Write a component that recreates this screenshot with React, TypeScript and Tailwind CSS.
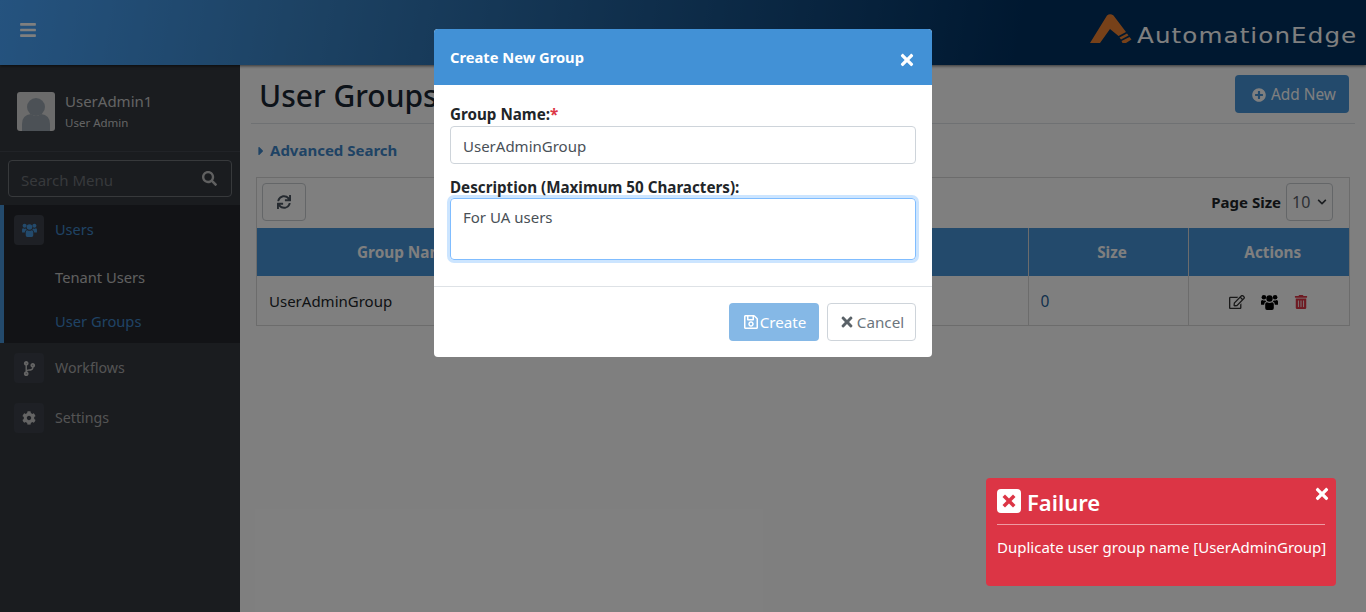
import React from "react";
import {
  FaBars, FaSearch, FaSync, FaCodeBranch, FaCog, FaPlusCircle, FaRegEdit, FaTrashAlt,
  FaRegSave, FaTimes, FaCaretRight, FaChevronDown,
} from "react-icons/fa";

function UsersIcon({ w, h, className }: { w: number; h: number; className?: string }) {
  return (
    <svg width={w} height={h} viewBox="0 0 17 16" className={className} fill="currentColor">
      <circle cx="8.5" cy="4.5" r="3.2" />
      <circle cx="2.9" cy="3.2" r="2.3" />
      <circle cx="14.1" cy="3.2" r="2.3" />
      <path d="M4.2 10.2 Q4.2 8.2 6 8.2 Q8.5 9.6 11 8.2 Q12.8 8.2 12.8 10.2 V14 Q12.8 16 11 16 H6 Q4.2 16 4.2 14 Z" />
      <path d="M0 10.5 V7.6 Q0 6 1.4 6 Q2.8 6.9 4.4 6.4 Q4.8 7.3 5.4 7.6 Q3.2 8 3.1 10.8 H1 Q0 10.8 0 10.5 Z" />
      <path d="M17 10.5 V7.6 Q17 6 15.6 6 Q14.2 6.9 12.6 6.4 Q12.2 7.3 11.6 7.6 Q13.8 8 13.9 10.8 H16 Q17 10.8 17 10.5 Z" />
    </svg>
  );
}

function Logo() {
  return (
    <div className="flex items-start w-[266px] h-[34px] mb-[3px] shrink-0">
      <svg width="47" height="30" viewBox="0 0 47 30" className="shrink-0">
        <path d="M0 29 L17 1.5 Q20 -1 23.5 1.5 L36 18 L28.5 22 L20 15 L10 29 Z" fill="#ef8333" />
        <path d="M29.5 23.5 L37 19.5 L38.5 21.5 L31 25.5 Z" fill="#ef8333" />
        <path d="M31.5 27 L39.5 23 L41.5 25.5 L36 29 L32.5 29 Z" fill="#ef8333" />
      </svg>
      <span className="block w-[182px] origin-left scale-x-[1.2] font-['DejaVu_Sans'] text-[20.5px] leading-[26px] tracking-[0.9px] text-[#ffffff] mt-[9px] whitespace-nowrap">AutomationEdge</span>
    </div>
  );
}

function Avatar() {
  return (
    <div className="w-[38px] h-[39px] rounded-[3px] bg-[#d6d6d6] overflow-hidden shrink-0">
      <svg width="38" height="39" viewBox="0 0 38 39">
        <circle cx="19" cy="15" r="9" fill="#99a3ac" />
        <path d="M5 39 V32 Q5 23 14 22 Q19 26 24 22 Q33 23 33 32 V39 Z" fill="#99a3ac" />
      </svg>
    </div>
  );
}

function NavIcon({ children, active }: { children: React.ReactNode; active?: boolean }) {
  return (
    <span className={`w-[30px] h-[30px] rounded-[4px] bg-[#3c404a] flex items-center justify-center shrink-0 ${active ? "text-[#4694d8]" : "text-[#c8c8c8]"}`}>
      {children}
    </span>
  );
}

function Sidebar() {
  return (
    <aside className="w-[240px] shrink-0 bg-[#34383f] flex flex-col text-[14.5px]">
      <div className="h-[87px] pt-[27px] pl-[17px] flex gap-[10px] border-b border-[#42464e]">
        <Avatar />
        <div className="text-[#c8c8c8]">
          <div className="text-[15px] leading-[20px] -mt-[1px]">UserAdmin1</div>
          <div className="text-[11.5px] leading-[16px] mt-[4px]">User Admin</div>
        </div>
      </div>
      <div className="px-[8px] pt-[8px] pb-[8px]">
        <div className="h-[37px] border border-[#6f7277] rounded-[4px] flex items-center justify-between pl-[12px] pr-[14px]">
          <span className="text-[#6f7277] text-[15px] pt-[3px]">Search Menu</span>
          <FaSearch className="text-[#c0c0c0] text-[15px]" />
        </div>
      </div>
      <div className="h-[138px] bg-[#25272c] border-l-[4px] border-[#4694d8] pl-[10px] pt-[10px]">
        <div className="flex items-center gap-[11px]">
          <NavIcon active><UsersIcon w={15} h={14} /></NavIcon>
          <span className="text-[#3f86c9] -mt-[1px]">Users</span>
        </div>
        <div className="pl-[41px] text-[#c0c0c0] text-[14.7px] mt-[21px] leading-[22px]">Tenant Users</div>
        <div className="pl-[41px] text-[#3f86c9] text-[14.7px] mt-[22px] leading-[22px]">User Groups</div>
      </div>
      <div className="pl-[14px] pt-[10px] flex flex-col gap-[20px] text-[#a8a8a8]">
        <div className="flex items-center gap-[11px]">
          <NavIcon><FaCodeBranch className="text-[15px]" /></NavIcon>
          <span className="-mt-[1px] text-[14.2px]">Workflows</span>
        </div>
        <div className="flex items-center gap-[11px]">
          <NavIcon><FaCog className="text-[14px]" /></NavIcon>
          <span className="-mt-[1px] text-[14.2px]">Settings</span>
        </div>
      </div>
    </aside>
  );
}

function Main() {
  return (
    <main className="flex-1 bg-[#ffffff] px-[11px] pt-[1px] text-[#212529] min-w-0">
      <div className="h-[58px] border-b border-[#dee2e6] flex items-center justify-between pl-[8px] pr-[6px]">
        <h1 className="text-[30px] font-medium text-[#1a2633] leading-[40px] mt-[2px]">User Groups</h1>
        <button className="w-[114px] h-[38px] -mt-[1px] pt-[1px] pl-[4px] rounded-[4px] bg-[#4694d8] text-[#ffffff] flex items-center justify-center gap-[5px] text-[15.4px]">
          <FaPlusCircle className="text-[14px]" /> Add New
        </button>
      </div>
      <div className="flex items-center h-[53px] pl-[3px] gap-[2px] text-[#3f86c9] font-bold text-[15px]">
        <FaCaretRight className="text-[14px]" />
        <span>Advanced Search</span>
      </div>
      <div className="mx-[5px] border border-[#d8d8d8]">
        <div className="h-[50px] flex items-start justify-between pt-[5px] pl-[5px] pr-[16px]">
          <button className="w-[44px] h-[38px] border border-[#c8ccd0] rounded-[4px] flex items-center justify-center text-[#4b5560]">
            <FaSync className="text-[14px]" />
          </button>
          <div className="flex items-center gap-[5px]">
            <span className="font-bold text-[15px]">Page Size</span>
            <span className="w-[47px] h-[38px] border border-[#c8ccd0] rounded-[4px] flex items-center justify-between pl-[5px] pr-[4px] text-[#5a6168] text-[16px]">
              10 <FaChevronDown className="text-[10px] text-[#343a40] mr-[1px]" />
            </span>
          </div>
        </div>
        <table className="w-full table-fixed border-collapse text-[15px]">
          <colgroup>
            <col className="w-[290px]" />
            <col />
            <col className="w-[160px]" />
            <col className="w-[161px]" />
          </colgroup>
          <thead>
            <tr className="h-[48px] bg-[#4694d8] text-[#ffffff] font-bold text-[15.3px]">
              <th className="font-bold pl-[7px] border-r border-[#d8d8d8]">Group Name</th>
              <th className="font-bold pl-[8px] border-r border-[#d8d8d8]">Description</th>
              <th className="font-bold pl-[8px] border-r border-[#d8d8d8]">Size</th>
              <th className="font-bold pl-[8px]">Actions</th>
            </tr>
          </thead>
          <tbody>
            <tr className="h-[49px]">
              <td className="pl-[12px] pt-[1px] border-r border-[#d8d8d8]">UserAdminGroup</td>
              <td className="border-r border-[#d8d8d8]"></td>
              <td className="pl-[12px] pt-[2px] border-r border-[#d8d8d8] text-[#1f5f99] text-[15.5px]">0</td>
              <td>
                <div className="flex items-center justify-center gap-[16px] pt-[2px] text-[#000000]">
                  <FaRegEdit className="text-[16px] text-[#333333]" />
                  <UsersIcon w={17} h={16} />
                  <FaTrashAlt className="text-[14px] text-[#dc3545]" />
                </div>
              </td>
            </tr>
          </tbody>
        </table>
      </div>
    </main>
  );
}

function Modal() {
  return (
    <div className="absolute left-[434px] top-[29px] w-[498px] h-[328px] bg-[#ffffff] rounded-[4px] overflow-hidden text-[15px] flex flex-col">
      <div className="h-[56px] shrink-0 bg-[#4291d6] text-[#ffffff] flex items-center justify-between pl-[16px] pr-[16px]">
        <span className="font-bold text-[14.7px] mt-[0px]">Create New Group</span>
        <FaTimes className="text-[18px] mt-[6px]" />
      </div>
      <div className="px-[16px] h-[202px] shrink-0 border-b border-[#dee2e6] pt-[19px]">
        <label className="block font-bold text-[15.2px] leading-[22px] text-[#212529] h-[22px] -mt-[1px] mb-[1px]">Group Name:<span className="text-[#dc3545]">*</span></label>
        <div className="h-[38px] border border-[#ced4da] rounded-[4px] flex items-center pl-[12px] pt-[2px] text-[#495057]">UserAdminGroup</div>
        <label className="block font-bold text-[15.2px] leading-[22px] text-[#212529] mt-[12px] h-[22px]">Description (Maximum 50 Characters):</label>
        <div className="h-[62px] border border-[#80bdff] rounded-[4px] shadow-[0_0_0_3px_rgba(0,123,255,0.2)] pl-[12px] pt-[7px] text-[#495057] leading-[22px]">For UA users</div>
      </div>
      <div className="flex-1 flex items-start justify-end gap-[8px] pr-[16px] pt-[16px] text-[15.2px]">
        <button className="w-[90px] h-[38px] rounded-[4px] bg-[#85b8e6] text-[#ffffff] flex items-center justify-center pl-[1px]">
          <FaRegSave className="text-[16px] mr-[1px]" />Create
        </button>
        <button className="w-[89px] h-[38px] rounded-[4px] border border-[#ced4da] text-[#6c757d] flex items-center justify-center">
          <FaTimes className="text-[16px] text-[#5a6268] mr-[2px]" />Cancel
        </button>
      </div>
    </div>
  );
}

function Toast() {
  return (
    <div className="absolute left-[986px] top-[478px] w-[350px] h-[108px] rounded-[4px] bg-[#dc3545] text-[#ffffff] px-[11px] pt-[11px]">
      <FaTimes className="absolute right-[5px] top-[7px] text-[18px]" />
      <div className="h-[36px] border-b border-[#ee9aa2] flex items-start gap-[6px]">
        <svg width="24" height="24" viewBox="0 0 24 24" className="shrink-0">
          <path
            fillRule="evenodd"
            fill="#ffffff"
            d="M4 0 H20 Q24 0 24 4 V20 Q24 24 20 24 H4 Q0 24 0 20 V4 Q0 0 4 0 Z M8 5.5 L5.5 8 L9.5 12 L5.5 16 L8 18.5 L12 14.5 L16 18.5 L18.5 16 L14.5 12 L18.5 8 L16 5.5 L12 9.5 Z"
          />
        </svg>
        <span className="text-[22px] font-semibold leading-[26px]">Failure</span>
      </div>
      <div className="text-[15px] leading-[22px] mt-[11px] whitespace-nowrap">Duplicate user group name [UserAdminGroup]</div>
    </div>
  );
}

export default function App() {
  return (
    <div className="relative w-[1366px] h-[612px] overflow-hidden font-['Noto_Sans',sans-serif] bg-[#ffffff] flex flex-col">
      <header className="relative z-10 h-[65px] shrink-0 bg-[linear-gradient(100deg,#4aa6fe_0%,#3a85c8_22%,#003060_75%,#003060_100%)] shadow-[0_1px_3px_rgba(0,0,0,0.6)] flex items-center justify-between pl-[19px] pr-[10px] text-[#ffffff]">
        <FaBars className="text-[18px] mb-[5px]" />
        <Logo />
      </header>
      <div className="flex flex-1 min-h-0">
        <Sidebar />
        <Main />
      </div>
      <div className="absolute inset-0 z-20 bg-[#000000]/50" />
      <div className="absolute inset-0 z-30">
        <Modal />
        <Toast />
      </div>
    </div>
  );
}
